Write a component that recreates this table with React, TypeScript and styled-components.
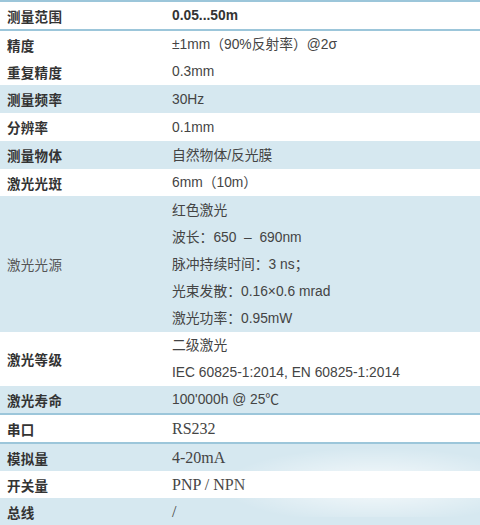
import React from "react";
import styled, { createGlobalStyle } from "styled-components";

const Global = createGlobalStyle`
  html, body { margin: 0; padding: 0; background: #ffffff; }
  body { width: 480px; height: 525px; overflow: hidden; }
`;

const Table = styled.div`
  width: 480px;
  border-top: 2px solid #9cc6da;
  font-family: "Liberation Sans", "Noto Sans CJK SC", sans-serif;
  color: #3a3a3a;
  position: relative;
`;

const Row = styled.div<{ $blue?: boolean; $line?: boolean; $h?: number }>`
  display: grid;
  grid-template-columns: 165px 1fr;
  align-items: center;
  background: ${(p) => (p.$blue ? "#d6e8f0" : "#ffffff")};
  border-bottom: ${(p) => (p.$line ? "2px solid #9cc6da" : "none")};
  min-height: ${(p) => p.$h ?? 27}px;
  box-sizing: border-box;
`;

const Label = styled.div<{ $plain?: boolean }>`
  padding-left: 7px;
  font-family: "Noto Sans CJK SC", sans-serif;
  font-size: 13.5px;
  font-weight: ${(p) => (p.$plain ? 400 : 700)};
  color: ${(p) => (p.$plain ? "#555" : "#333")};
  letter-spacing: 0.3px;
`;

const Value = styled.div<{ $bold?: boolean; $serif?: boolean }>`
  display: flex;
  flex-direction: column;
  padding-left: 7px;
  font-family: ${(p) =>
    p.$serif
      ? `"Liberation Serif", "Noto Sans CJK SC", serif`
      : `"Liberation Sans", "Noto Sans CJK SC", sans-serif`};
  font-size: ${(p) => (p.$serif ? "16px" : "13.8px")};
  font-weight: ${(p) => (p.$bold ? 700 : 400)};
  color: ${(p) => (p.$bold ? "#333" : "#444")};
`;

const Line = styled.div`
  height: 27px;
  line-height: 27px;
  white-space: pre;
`;

const Smudge = styled.div`
  position: absolute;
  left: 220px;
  top: 445px;
  width: 260px;
  height: 70px;
  background: radial-gradient(ellipse at 60% 55%, rgba(255,255,255,0.8), rgba(255,255,255,0) 70%);
  pointer-events: none;
`;

type R = {
  label: string;
  values: string[];
  blue?: boolean;
  line?: boolean;
  bold?: boolean;
  serif?: boolean;
  plain?: boolean;
  h?: number;
};

const rows: R[] = [
  { label: "测量范围", values: ["0.05...50m"], bold: true, line: true, h: 29 },
  { label: "精度", values: ["±1mm（90%反射率）@2σ"] },
  { label: "重复精度", values: ["0.3mm"] },
  { label: "测量频率", values: ["30Hz"], blue: true, h: 28 },
  { label: "分辨率", values: ["0.1mm"], h: 28 },
  { label: "测量物体", values: ["自然物体/反光膜"], blue: true, h: 28 },
  { label: "激光光斑", values: ["6mm（10m）"] },
  {
    label: "激光光源",
    plain: true,
    blue: true,
    values: [
      "红色激光",
      "波长：650  –  690nm",
      "脉冲持续时间：3 ns；",
      "光束发散：0.16×0.6 mrad",
      "激光功率：0.95mW",
    ],
    h: 136,
  },
  { label: "激光等级", values: ["二级激光", "IEC 60825-1:2014, EN 60825-1:2014"], h: 54 },
  { label: "激光寿命", values: ["100'000h @ 25℃"], blue: true, line: true, h: 28 },
  { label: "串口", values: ["RS232"], serif: true, line: true, h: 29 },
  { label: "模拟量", values: ["4-20mA"], serif: true, blue: true, h: 27 },
  { label: "开关量", values: ["PNP / NPN"], serif: true, h: 27 },
  { label: "总线", values: ["/"], serif: true, blue: true, line: true, h: 28 },
];

export default function App() {
  return (
    <>
      <Global />
      <Table>
        {rows.map((r) => (
          <Row key={r.label} $blue={r.blue} $line={r.line} $h={r.h}>
            <Label $plain={r.plain}>{r.label}</Label>
            <Value $bold={r.bold} $serif={r.serif}>
              {r.values.map((v) => (
                <Line key={v}>{v}</Line>
              ))}
            </Value>
          </Row>
        ))}
        <Smudge />
      </Table>
    </>
  );
}
